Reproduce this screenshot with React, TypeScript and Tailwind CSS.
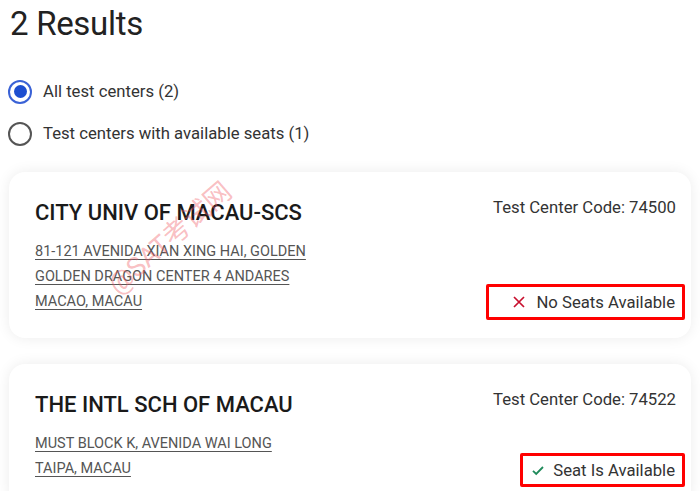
const centers = [
  {
    name: 'CITY UNIV OF MACAU-SCS',
    code: '74500',
    address: ['81-121 AVENIDA XIAN XING HAI, GOLDEN', 'GOLDEN DRAGON CENTER 4 ANDARES', 'MACAO, MACAU'],
    available: false,
  },
  {
    name: 'THE INTL SCH OF MACAU',
    code: '74522',
    address: ['MUST BLOCK K, AVENIDA WAI LONG', 'TAIPA, MACAU'],
    available: true,
  },
];

function Radio({ checked, label }: { checked: boolean; label: string }) {
  return (
    <label className="flex items-center gap-[11px]">
      {checked ? (
        <span className="flex h-[24px] w-[24px] items-center justify-center rounded-full border-2 border-[#3a62d6]">
          <span className="h-[13px] w-[13px] rounded-full bg-[#1d4ed0]" />
        </span>
      ) : (
        <span className="h-[24px] w-[24px] rounded-full border-2 border-[#555]" />
      )}
      <span className="text-[16.7px] text-[#333]">{label}</span>
    </label>
  );
}

function Status({ available }: { available: boolean }) {
  if (available) {
    return (
      <div className="flex h-[34px] items-center gap-[9px] rounded-[2px] border-[3px] border-[#f00] pl-[9px] pr-[7px]">
        <svg width="12" height="11" viewBox="0 0 12 11" fill="none">
          <path d="M1 5.8l3.2 3.2L11 2" stroke="#1f8a5a" strokeWidth="1.8" />
        </svg>
        <span className="text-[16.7px] text-[#333]">Seat Is Available</span>
      </div>
    );
  }
  return (
    <div className="flex h-[36px] items-center gap-[11px] rounded-[2px] border-[3px] border-[#f00] pl-[24px] pr-[7px]">
      <svg width="12" height="12" viewBox="0 0 12 12" fill="none">
        <path d="M1 1l10 10M11 1L1 11" stroke="#c8102e" strokeWidth="1.7" />
      </svg>
      <span className="text-[16.7px] text-[#333]">No Seats Available</span>
    </div>
  );
}

export default function App() {
  return (
    <div className="h-[491px] w-[700px] overflow-hidden bg-white font-['Roboto',sans-serif]">
      <h1 className="ml-[10px] pt-[2px] text-[33px] leading-[44px] tracking-[-0.3px] text-[#222]">2 Results</h1>

      <div className="mt-[33px] ml-[8px] flex flex-col gap-[17px]">
        <Radio checked label="All test centers (2)" />
        <Radio checked={false} label="Test centers with available seats (1)" />
      </div>

      <div className="mt-[26px] flex flex-col gap-[26px] px-[9px]">
        {centers.map((c, i) => (
          <div
            key={c.code}
            className="relative rounded-[16px] bg-white pt-[27px] pr-[6px] pb-[18px] pl-[26px] shadow-[0_0_14px_rgba(0,0,0,0.08)]"
          >
            <div className="flex justify-between">
              <div className="pb-[6px]">
                <div className="text-[22px] leading-[28px] font-medium text-[#1a1a1a]">{c.name}</div>
                <div className="mt-[12px] flex flex-col">
                  {c.address.map((line) => (
                    <span key={line} className="text-[14.5px] leading-[25px] text-[#555] underline underline-offset-[3px]">
                      {line}
                    </span>
                  ))}
                </div>
              </div>
              <div className="flex flex-col items-end justify-between">
                <div className="-mt-[2px] pr-[9px] text-[16.7px] leading-[22px] text-[#333]">Test Center Code: {c.code}</div>
                <Status available={c.available} />
              </div>
            </div>
            {i === 0 && (
              <div className="pointer-events-none absolute left-[161px] top-[66px] -translate-x-1/2 -translate-y-1/2 -rotate-[41deg] whitespace-nowrap font-['Roboto','Noto_Sans_CJK_SC',sans-serif] text-[27px] text-[rgba(240,90,100,0.4)]">
                @SAT考试网
              </div>
            )}
          </div>
        ))}
      </div>
    </div>
  );
}
